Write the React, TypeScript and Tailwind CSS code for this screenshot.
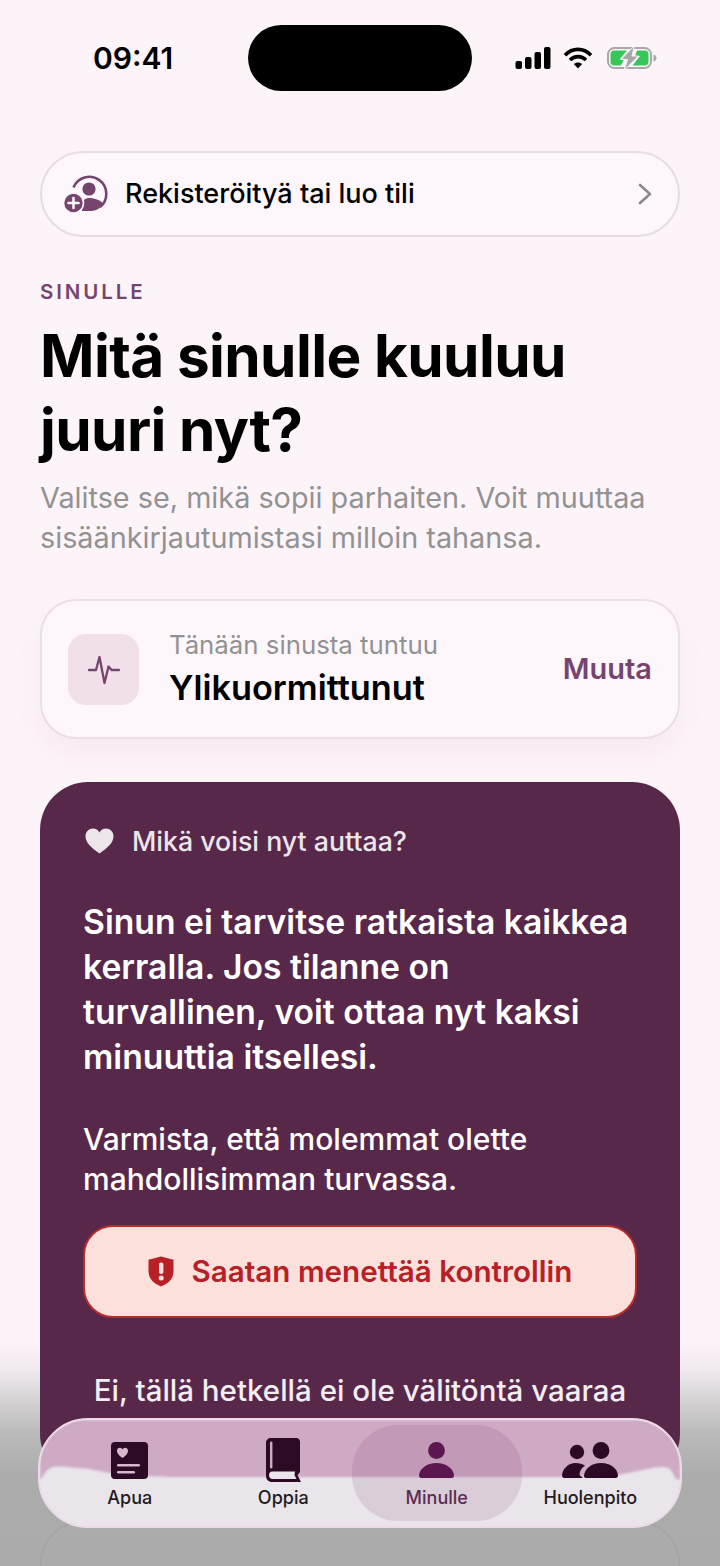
import React from "react";

const font = { fontFamily: "Inter, 'Liberation Sans', sans-serif" };

function Signal() {
  return (
    <svg width="36" height="22" viewBox="0 0 36 22" fill="#000">
      <rect x="0.5" y="14" width="6.5" height="8" rx="2" />
      <rect x="10" y="10" width="6.5" height="12" rx="2" />
      <rect x="19.5" y="5" width="6.5" height="17" rx="2" />
      <rect x="29" y="0" width="6.5" height="22" rx="2" />
    </svg>
  );
}

function Wifi() {
  return (
    <svg width="30" height="22" viewBox="0 0 30 22" fill="none" stroke="#000" strokeWidth="3.6">
      <path d="M2 8.2 C9.5 0.4 20.5 0.4 28 8.2" />
      <path d="M7 13 C11.5 8.5 18.5 8.5 23 13" />
      <path d="M15 21.5 L10.8 17 C13 14.9 17 14.9 19.2 17 Z" fill="#000" stroke="none" />
    </svg>
  );
}

function Battery() {
  return (
    <svg width="50" height="26" viewBox="0 0 50 26" fill="none">
      <rect x="1" y="3" width="43" height="20" rx="6.5" stroke="#a8a8a8" strokeWidth="2" />
      <path d="M46.5 9.5 C48.5 10 49.5 11.5 49.5 13 C49.5 14.5 48.5 16 46.5 16.5 Z" fill="#a8a8a8" />
      <path d="M7 5.5 H20 L12.5 14.5 H17 L14 20.5 H7 C5 20.5 3.5 19 3.5 17 V9 C3.5 7 5 5.5 7 5.5 Z" fill="#37c759" />
      <path d="M38 5.5 H30 L28 11 H33 L25.5 20.5 H38 C40 20.5 41.5 19 41.5 17 V9 C41.5 7 40 5.5 38 5.5 Z" fill="#37c759" />
      <path d="M27.5 0.5 L14 14.5 H20.5 L17 25.5 L31.5 11 H25 Z" fill="#a8a8a8" stroke="#fdf4f9" strokeWidth="1" />
    </svg>
  );
}

function AddUser() {
  return (
    <svg width="44" height="38" viewBox="0 0 44 38" fill="none">
      <path d="M9.5 12.5 A17 17 0 1 1 36 32" stroke="#76456d" strokeWidth="2.6" />
      <circle cx="25" cy="14" r="6.6" fill="#76456d" />
      <path d="M18 36 V30 C18 25.5 21.5 23 25 23 C31 23 37 25.5 39.5 29 A17 17 0 0 1 28 36 Z" fill="#76456d" />
      <circle cx="9.5" cy="28" r="10" fill="#76456d" stroke="#fdf6fb" strokeWidth="1.6" />
      <path d="M9.5 23 V33 M4.5 28 H14.5" stroke="#fdf6fb" strokeWidth="2.6" strokeLinecap="round" />
    </svg>
  );
}

function Pulse() {
  return (
    <svg width="32" height="32" viewBox="0 0 32 32" fill="none" stroke="#76456d" strokeWidth="2.3" strokeLinecap="round" strokeLinejoin="round">
      <path d="M1 17 H8 L11.5 4 L16.5 30 L20.5 13.5 L23.5 17 H31" />
    </svg>
  );
}

function Heart() {
  return (
    <svg width="29" height="26" viewBox="0 0 29 26" fill="#ece6ea">
      <path d="M14.5 25.5 C6 19.5 0.5 14.8 0.5 8.3 C0.5 3.6 4 0.5 8 0.5 C10.8 0.5 13.2 2 14.5 4.6 C15.8 2 18.2 0.5 21 0.5 C25 0.5 28.5 3.6 28.5 8.3 C28.5 14.8 23 19.5 14.5 25.5 Z" />
    </svg>
  );
}

function Shield() {
  return (
    <svg width="26" height="31" viewBox="0 0 26 31">
      <path d="M13 0.5 L25.5 3.8 V15 C25.5 23 20 27.5 13 30.5 C6 27.5 0.5 23 0.5 15 V3.8 Z" fill="#b72025" />
      <rect x="11" y="6.5" width="4.4" height="11.5" rx="2" fill="#fbe0dc" />
      <circle cx="13.2" cy="22" r="2.5" fill="#fbe0dc" />
    </svg>
  );
}

function ApuaIcon() {
  return (
    <svg width="37" height="37" viewBox="0 0 37 37">
      <rect x="0" y="0" width="37" height="37" rx="4" fill="#2c0a25" />
      <path d="M11.5 16 C8 13.5 6 11.5 6 9 C6 7 7.3 5.8 8.9 5.8 C10 5.8 11 6.5 11.5 7.6 C12 6.5 13 5.8 14.1 5.8 C15.7 5.8 17 7 17 9 C17 11.5 15 13.5 11.5 16 Z" fill="#d6b8cf" />
      <rect x="6" y="22" width="23" height="2.4" rx="1.2" fill="#d6b8cf" />
      <rect x="6" y="29" width="18" height="2.4" rx="1.2" fill="#d6b8cf" />
    </svg>
  );
}

function BookIcon() {
  return (
    <svg width="35" height="44" viewBox="0 0 35 44">
      <path d="M5 0 H30 C32.5 0 34 1.5 34 4 V34 L31.5 37 L35 44 H6 C2.5 44 0 41.5 0 38 V5 C0 2 2 0 5 0 Z" fill="#2c0a25" />
      <rect x="4" y="3.5" width="2.4" height="27" rx="1.2" fill="#cfaac5" />
      <path d="M6 33.5 H29 L28.5 37 L30.5 41 H6.5 C4.5 41 3 39.2 3 37.2 C3 35.2 4.3 33.5 6 33.5 Z" fill="#e9e5ea" />
    </svg>
  );
}

function PersonIcon() {
  return (
    <svg width="35" height="36" viewBox="0 0 35 36" fill="#5c1650">
      <circle cx="17.5" cy="8.5" r="8.4" />
      <path d="M2.5 36 C0.8 36 0 35 0 33.5 C0.5 26.5 8 21 17.5 21 C27 21 34.5 26.5 35 33.5 C35 35 34.2 36 32.5 36 Z" />
    </svg>
  );
}

function PeopleIcon() {
  return (
    <svg width="56" height="36" viewBox="0 0 56 36" fill="#2c0a25">
      <circle cx="15" cy="10" r="7.2" />
      <path d="M2.5 36 C0.8 36 0 35 0 33.5 C0.5 26.5 6.5 21 13.5 21 C17.5 21 20.5 22 23 23.5 C19.5 26 17.5 29 17.5 33 L21 36 Z" />
      <circle cx="39" cy="8.5" r="8.4" />
      <path d="M24.5 36 C22.5 36 21.5 35 22 33.5 C23 26.5 29.5 21 39 21 C48.5 21 55.5 26.5 56 33.5 C56 35 55.2 36 53.5 36 Z" />
    </svg>
  );
}

function Tab({ icon, label, active }: { icon: React.ReactNode; label: string; active?: boolean }) {
  return (
    <div className="flex flex-col items-center">
      <div className="h-[44px] flex items-center">{icon}</div>
      <span className={`mt-[5px] text-[18px] leading-[22px] font-medium whitespace-nowrap ${active ? "text-[#5c2a52]" : "text-[#231a21]"}`}>{label}</span>
    </div>
  );
}

export default function App() {
  return (
    <div className="relative w-[720px] h-[1566px] overflow-hidden bg-[#fdf4f9]" style={font}>
      {/* bottom fade, behind the page content */}
      <div className="absolute left-0 right-0 top-[1340px] h-[226px] bg-[linear-gradient(to_bottom,#fdf4f9_0%,#efe9ed_14%,#d8d5d7_25%,#bdbcbd_40%,#adacad_60%,#ababab_100%)]" />
      <div className="absolute left-[40px] right-[40px] top-[1520px] h-[90px] rounded-[46px] border-[1.5px] border-[#a39fa3]" />

      <div className="relative">
        <div className="h-[151px] flex items-start pt-[25px] pl-[93px] pr-[63px]">
          <span className="w-[155px] text-[30px] leading-[66px] font-semibold text-black">09:41</span>
          <div className="w-[224px] h-[66px] rounded-[33px] bg-black" />
          <div className="flex-1 flex items-center justify-end h-[66px]">
            <Signal />
            <div className="ml-[12px]"><Wifi /></div>
            <div className="ml-[14px]"><Battery /></div>
          </div>
        </div>

        <div className="px-[40px]">
          <div className="h-[86px] rounded-[43px] border-2 border-[#e9dbe4] bg-[#fdf6fb] flex items-center pl-[22px] pr-[26px]">
            <AddUser />
            <span className="ml-[17px] text-[27px] font-medium text-black flex-1 leading-[30px]">Rekisteröityä tai luo tili</span>
            <svg width="14" height="22" viewBox="0 0 14 22" fill="none" stroke="#8a8a8e" strokeWidth="2.6" strokeLinecap="round" strokeLinejoin="round">
              <path d="M2 2 L12 11 L2 20" />
            </svg>
          </div>

          <div className="mt-[43px] text-[20.5px] leading-[24px] font-semibold tracking-[2.9px] text-[#76456d]">SINULLE</div>
          <h1 className="mt-[15px] text-[58.5px] leading-[74px] font-bold text-black tracking-[-0.6px] whitespace-nowrap">Mitä sinulle kuuluu<br />juuri nyt?</h1>
          <p className="mt-[11px] text-[28.8px] leading-[40px] text-[#929292] whitespace-nowrap">Valitse se, mikä sopii parhaiten. Voit muuttaa<br />sisäänkirjautumistasi milloin tahansa.</p>

          <div className="mt-[41px] h-[140px] rounded-[36px] border-2 border-[#eddde7] bg-[#fdf6fb] shadow-[0_14px_30px_rgba(90,40,75,0.05)] flex items-center pl-[26px] pr-[26px]">
            <div className="w-[71px] h-[71px] rounded-[18px] bg-[#f1dfea] flex items-center justify-center">
              <Pulse />
            </div>
            <div className="ml-[30px] flex-1">
              <div className="text-[25.8px] leading-[30px] text-[#929292]">Tänään sinusta tuntuu</div>
              <div className="mt-[7px] text-[34.3px] leading-[42px] font-semibold text-black">Ylikuormittunut</div>
            </div>
            <span className="text-[29px] font-semibold text-[#76456d]">Muuta</span>
          </div>

          <div className="mt-[43px] h-[700px] rounded-[48px] bg-[#58284b] pt-[42px] px-[43px]">
            <div className="flex items-center">
              <div className="w-[29px] ml-[2px]"><Heart /></div>
              <span className="ml-[18px] text-[26.7px] leading-[34px] font-medium text-[#ece6ea]">Mikä voisi nyt auttaa?</span>
            </div>
            <p className="mt-[41px] text-[33.7px] leading-[45px] font-semibold text-white">Sinun ei tarvitse ratkaista kaikkea kerralla. Jos tilanne on turvallinen, voit ottaa nyt kaksi minuuttia itsellesi.</p>
            <p className="mt-[40px] text-[30px] leading-[40px] font-medium text-white">Varmista, että molemmat olette mahdollisimman turvassa.</p>
            <div className="mt-[26px] h-[93px] rounded-[30px] border-2 border-[#b92c2c] bg-[#fbe0dc] flex items-center justify-center gap-[18px]">
              <Shield />
              <span className="text-[29.6px] font-semibold text-[#b72025]">Saatan menettää kontrollin</span>
            </div>
            <div className="mt-[54px] text-center text-[29.5px] leading-[36px] font-medium text-[#f3eef1] whitespace-nowrap">Ei, tällä hetkellä ei ole välitöntä vaaraa</div>
          </div>
        </div>
      </div>

      {/* tab bar */}
      <div className="absolute left-[38px] top-[1418px] w-[644px] h-[110px] rounded-[50px] border-2 border-[#ecdbe7] overflow-hidden bg-[#e9e5ea]">
        <svg className="absolute inset-0 blur-[1px]" width="640" height="106" viewBox="0 0 640 106">
          <path d="M0 0 H640 V60 L635 58 C632 50 630 47 622 47 C612 47 600 51 577 55 C550 57 510 57 483 57 L130 57 C105 56 90 55 70 53 C58 51 48 48 37 48 C28 47 20 46 13 47 C9 48 7 50 5 53 L0 60 Z" fill="#cfaac5" />
        </svg>
        <div className="absolute left-[312px] top-[5px] w-[170px] h-[96px] rounded-[46px] bg-[#6b2a5c]/[0.12]" />
        <div className="relative grid grid-cols-4 w-[614px] ml-[13px] pt-[18px] text-center">
          <Tab icon={<ApuaIcon />} label="Apua" />
          <Tab icon={<BookIcon />} label="Oppia" />
          <Tab icon={<PersonIcon />} label="Minulle" active />
          <Tab icon={<PeopleIcon />} label="Huolenpito" />
        </div>
      </div>
    </div>
  );
}
